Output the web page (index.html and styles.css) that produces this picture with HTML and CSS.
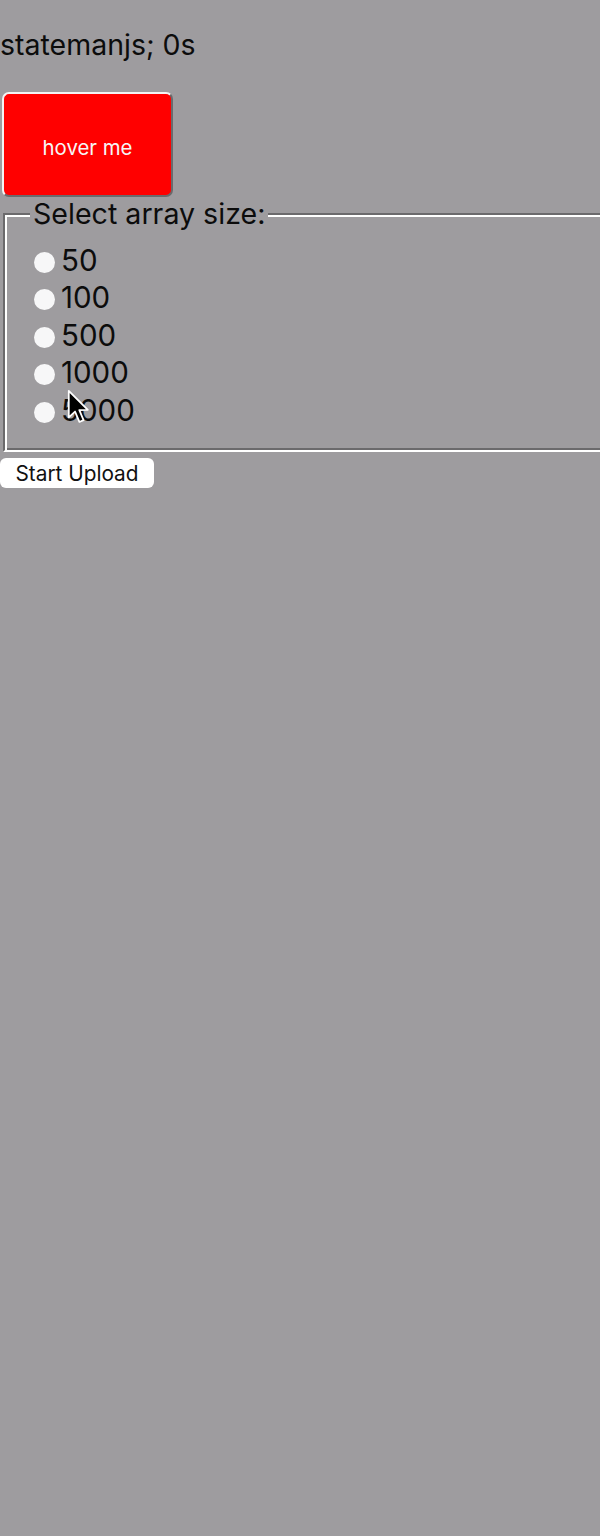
FILE: index.html
```html
<!DOCTYPE html>
<html>
<head>
<meta charset="utf-8">
<link rel="stylesheet" href="styles.css">
</head>
<body>
<main class="page">
  <p class="timer">statemanjs; 0s</p>
  <button class="hover-btn">hover me</button>
  <fieldset class="sizes">
    <legend class="sizes-legend">Select array size:</legend>
    <label class="opt"><span class="radio"></span>50</label>
    <label class="opt"><span class="radio"></span>100</label>
    <label class="opt"><span class="radio"></span>500</label>
    <label class="opt"><span class="radio"></span>1000</label>
    <label class="opt"><span class="radio"></span>5000</label>
  </fieldset>
  <button class="upload-btn">Start Upload</button>
  <svg class="cursor" width="26" height="38" viewBox="0 0 22 32">
    <path d="M1.5 1.5 L1.5 24 L6.8 19 L10.5 27.8 L14 26.3 L10.4 17.8 L17.6 17.6 Z" fill="#000" stroke="#fff" stroke-width="1.5" stroke-linejoin="round"/>
  </svg>
</main>
</body>
</html>
```
FILE: styles.css
```css
html, body {
  margin: 0;
  padding: 0;
  background: #9e9c9f;
}
body {
  font-family: Inter, "Liberation Sans", Arial, sans-serif;
  color: #0c0c0c;
}
.page {
  position: relative;
  display: flex;
  flex-direction: column;
  align-items: flex-start;
  padding-top: 27px;
  min-height: 1536px;
  box-sizing: border-box;
}
.timer {
  margin: 0;
  font-size: 28.5px;
  line-height: 36px;
  height: 36px;
}
.hover-btn {
  margin: 29px 0 0 2px;
  width: 171px;
  height: 105px;
  background: #ff0000;
  border: 2px solid;
  border-color: #f4f4f4 #6b6a6c #6b6a6c #f4f4f4;
  border-radius: 7px;
  color: #f6f6f6;
  font-family: Inter, "Liberation Sans", Arial, sans-serif;
  font-size: 20.4px;
  padding: 5px 0 0;
}
.sizes {
  margin: 2px 0 0 3px;
  width: 620px;
  box-sizing: border-box;
  height: 253px;
  padding: 12px 0 0 29px;
  border: 2px solid;
  border-color: #6b6a6c #ffffff #ffffff #6b6a6c;
  box-shadow: inset 2px 2px 0 #ffffff, inset -2px -2px 0 #6b6a6c;
  display: flex;
  flex-direction: column;
}
.sizes-legend {
  font-size: 28.6px;
  padding: 0 3px;
  margin-left: -4px;
  line-height: 30px;
  background: #9e9c9f;
}
.opt {
  display: flex;
  align-items: center;
  font-size: 29.5px;
  height: 37.5px;
}
.radio {
  width: 21px;
  height: 21px;
  border-radius: 50%;
  background: #f7f7f8;
  margin-right: 6px;
  margin-top: 5px;
}
.upload-btn {
  margin-top: 6px;
  width: 154px;
  height: 30px;
  background: #ffffff;
  border: none;
  border-radius: 6px;
  font-family: Inter, "Liberation Sans", Arial, sans-serif;
  font-size: 20.8px;
  color: #111;
  padding: 0;
}
.cursor {
  position: absolute;
  left: 67px;
  top: 389px;
}
```
